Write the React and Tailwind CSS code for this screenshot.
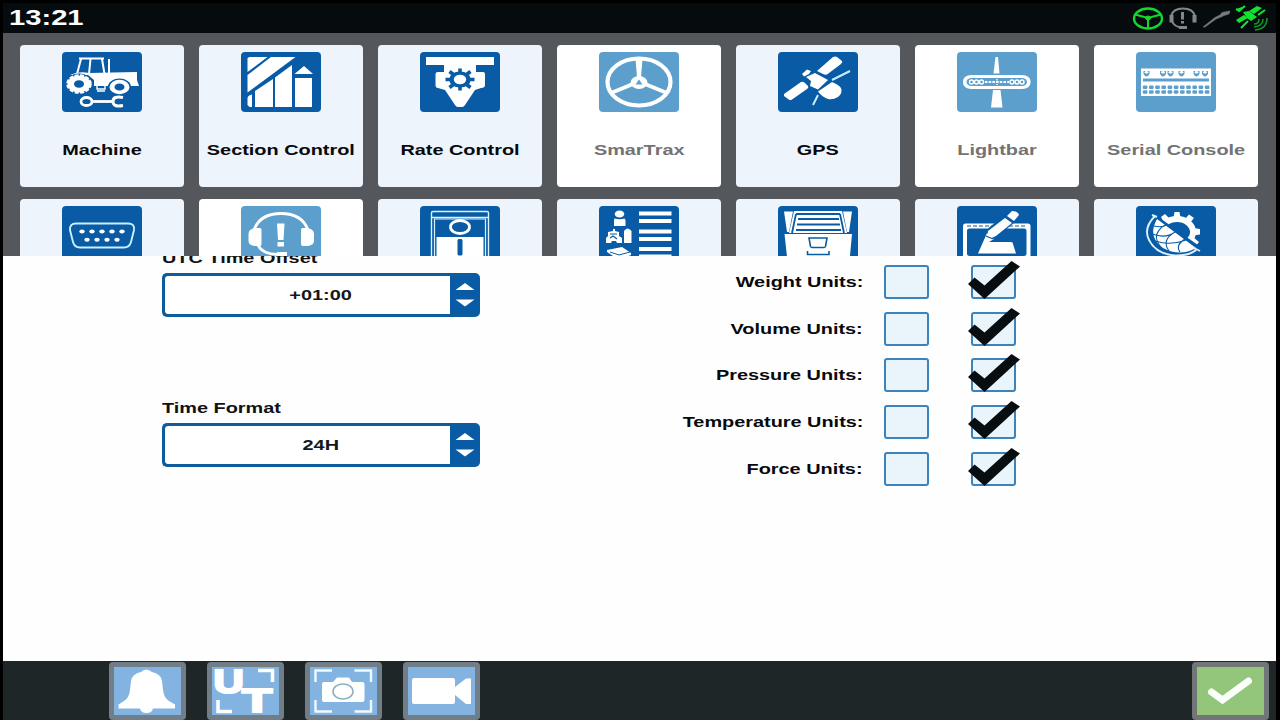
import React, { useState } from 'react';
import clsx from 'clsx';

const Wide = ({ children, className }) => (
  <span className={clsx('inline-block whitespace-nowrap font-bold scale-x-[1.325]', className)}>
    {children}
  </span>
);

// tile icons share an 80x60 box, c is the colour of the box itself
const TractorIcon = ({ c }) => (
  <g>
    <path d="M17 6.500H42M19 7L15 22M28.500 7L27 22M40 7L42.500 22M47 7V21" stroke="#fff" strokeWidth="2" fill="none" />
    <path d="M8 23Q16 19 27 21L75 20V28L77 34H68Q65 27 57 27Q49 27 46 34H32V28L26 23Z" fill="#fff" />
    <path d="M33 33H43V37H35V33M35 39H43" stroke="#fff" strokeWidth="1.400" fill="none" />
    <ellipse cx="17" cy="32" rx="13.500" ry="10.500" fill={c} />
    <ellipse cx="17" cy="32" rx="11.500" ry="8.500" fill="#fff" />
    <ellipse cx="17" cy="32" rx="11.800" ry="8.800" fill="none" stroke="#fff" strokeWidth="2" strokeDasharray="4 1.500" />
    <ellipse cx="17" cy="32" rx="5" ry="3.800" fill={c} />
    <ellipse cx="57.500" cy="35" rx="11.500" ry="8.500" fill={c} />
    <ellipse cx="57.500" cy="35" rx="10" ry="7.200" fill="#fff" />
    <ellipse cx="57.500" cy="35" rx="5" ry="3.600" fill={c} />
    <ellipse cx="24.500" cy="49.500" rx="5.500" ry="4" fill="none" stroke="#fff" strokeWidth="2.800" />
    <path d="M30 49.500H50" stroke="#fff" strokeWidth="2.800" />
    <path d="M61 45.500Q51 43.500 51 49.500Q51 55.500 61 53.500" fill="none" stroke="#fff" strokeWidth="3" />
  </g>
);

const SectionIcon = () => (
  <g fill="#fff">
    <path d="M8 5H26.500L6.500 20V6.500Z" />
    <path d="M30 5H54.500L6.500 40.500V23Z" />
    <path d="M6.500 46Q7 43 11 42.500V55H8.500L6.500 53Z" />
    <path d="M14 39L32 27V55H14Z" />
    <path d="M34 25.500L51 13V55H34Z" />
    <path d="M54 26H71V55H54Z" />
    <path d="M53.500 22L63 14L72 22Z" />
  </g>
);

const RateIcon = ({ c }) => (
  <g>
    <path d="M6 5H74V13H56V20H63Q65 20 65 22V33Q65 36 61 36L55 38L45 53Q44 55 42 55H38Q36 55 35 53L25 38L18 36Q15.500 36 15.500 33V22Q15.500 20 18 20H24V13H6Z" fill="#fff" />
    <path d="M40 16.500V38.500M25.500 27.500H54.500M29.500 19.500L50.500 35.500M50.500 19.500L29.500 35.500" stroke={c} strokeWidth="3.600" />
    <ellipse cx="40" cy="27.500" rx="10.800" ry="8" fill={c} />
    <ellipse cx="40" cy="27.500" rx="6.200" ry="4.800" fill="#fff" />
  </g>
);

const WheelIcon = ({ c }) => (
  <g fill="none" stroke="#fff">
    <ellipse cx="40" cy="30" rx="31.500" ry="23.500" strokeWidth="4.200" />
    <path d="M34 32L12 41M46 32L68 41" strokeWidth="4" />
    <path d="M36.500 7H43.500L42 25H38Z" fill="#fff" stroke="none" />
    <ellipse cx="40" cy="30.500" rx="8.500" ry="6.500" fill="#fff" stroke="none" />
    <path d="M40 27.500L43.500 32.500H36.500Z" fill={c} stroke="none" />
  </g>
);

const SatelliteIcon = () => (
  <g>
    <path d="M39 19L55 5Q57 4 59 5L64 9Q65 10 63 12L49 22.500Q47 23 45 22Z" fill="#fff" />
    <path d="M6 42L23 30Q25 29 27 31L30 34Q31 36 29 37L14 47.500Q12 49 10 47L6 44Z" fill="#fff" />
    <path d="M28 25L37 21L50 28L40 37.500L32 34L33 29Z" fill="#fff" />
    <path d="M24 22L29 17.500L33 19L31 22L26 24.500Z" fill="#fff" />
    <path d="M40 39.500L54 30Q61 33 63 36Q65 41 60 45Q55 48 50 47Q44 45 40 39.500Z" fill="#fff" />
    <path d="M54 28L72 19M40 43L35 53" stroke="#c5f0ff" strokeWidth="2" />
  </g>
);

const LightbarIcon = ({ c }) => (
  <g>
    <path d="M38.500 5H41L42.500 21.500H36.500Z" fill="#fff" />
    <path d="M36 38H43.500L45.500 55.500H34Z" fill="#fff" />
    <rect x="6" y="23" width="67.500" height="14" rx="8" ry="6" fill="#fff" />
    <rect x="9.500" y="26" width="60.500" height="8" rx="5" ry="4" fill={c} />
    <g fill="none" stroke="#fff" strokeWidth="1.400">
      <circle cx="14.500" cy="30" r="2" /><circle cx="19.500" cy="30" r="2" /><circle cx="24.500" cy="30" r="2" />
      <circle cx="55" cy="30" r="2" /><circle cx="60" cy="30" r="2" /><circle cx="65" cy="30" r="2" />
      <path d="M28 30H52" strokeWidth="1.800" strokeDasharray="2.500 1.200" />
      <path d="M40 27V33" strokeDasharray="1.500 1" />
    </g>
  </g>
);

const ConsoleIcon = ({ c }) => (
  <g>
    <rect x="5" y="16.500" width="70" height="27.500" fill="#fff" />
    {[10.5, 27, 34.5, 45.5, 60.5, 69].map((x) => (
      <g key={x}>
        <path d={`M${x - 3} 19V22Q${x} 27 ${x + 3} 22V19Z`} fill={c} />
        <ellipse cx={x} cy="20.300" rx="1.800" ry="1.300" fill="#fff" />
      </g>
    ))}
    <rect x="7" y="26.500" width="66" height="3" fill={c} />
    {[...Array(11).keys()].map((i) => (
      <g key={i} fill={c}>
        <rect x={6.8 + i * 6.2} y="33.500" width="4.600" height="3.500" rx="1" />
        <rect x={6.8 + i * 6.2} y="38.300" width="4.600" height="3.500" rx="1" />
      </g>
    ))}
  </g>
);

const PortIcon = () => (
  <g>
    <path d="M14 17.500H66Q73 17.500 72 24L69 36Q67.500 41.500 62 41.500H18Q12.500 41.500 11 36L8 24Q7.500 17.500 14 17.500Z" fill="none" stroke="#c9f0ff" strokeWidth="1.900" />
    {[20, 30, 40, 50, 60].map((x) => <ellipse key={x} cx={x} cy="25.500" rx="2.700" ry="2" fill="#fff" />)}
    {[25, 35, 45, 55].map((x) => <ellipse key={x} cx={x} cy="33.700" rx="2.700" ry="2" fill="#fff" />)}
  </g>
);

const HeadsetIcon = () => (
  <g>
    <path d="M13 24Q19 7.500 40 7.500T67 24M17 39Q21 48 37 48.500" fill="none" stroke="#fff" strokeWidth="2.800" />
    <path d="M14 22H19Q20.500 22 20.500 24V38Q20.500 40 19 40H13Q7.500 39 7.500 35V28Q7.500 23 14 22Z" fill="#fff" />
    <path d="M66 22H61.500Q60 22 60 24V38Q60 40 61.500 40H67Q73 39 73 35V28Q73 23 66 22Z" fill="#fff" />
    <path d="M36 17.500H43.500L42.500 34H37ZM36.500 36H43V40.500H36.500ZM36 46H46V52H36Z" fill="#fff" />
  </g>
);

const SwitchIcon = ({ c }) => (
  <g fill="none">
    <path d="M11.500 60V7Q11.500 5.500 13 5.500H67Q68.500 5.500 68.500 7V60M12 11.500H68" stroke="#d8f3ff" strokeWidth="1.400" />
    <path d="M14.500 60V13H65.500V60" stroke="#d8f3ff" strokeWidth="1.200" />
    <ellipse cx="40" cy="21" rx="9.500" ry="6.500" stroke="#fff" strokeWidth="2.800" />
    <rect x="16.500" y="31" width="47" height="29" fill="#fff" />
    <rect x="37.500" y="33" width="5" height="16.500" rx="1.500" fill={c} />
  </g>
);

const ListIcon = ({ c }) => (
  <g fill="#fff">
    <ellipse cx="20.500" cy="8" rx="4.800" ry="3.500" />
    <path d="M15.500 12.500Q20.500 14 25.500 12.500L26.500 14V20H15V14Z" />
    <path d="M9 26L14 25V23H16V25L20 26V30L23 32V37H18L17 35H13L12 37H7V32L9 30Z" />
    <path d="M11 28H18M11 32L14 30L18 33" stroke={c} strokeWidth="1.200" fill="none" />
    <path d="M25 25Q28.500 20 32.500 25V37H25Z" />
    <path d="M8 44L23 41L32 47V49L20 54L8 46Z" />
    <path d="M11 46L20 49L31 46" stroke={c} strokeWidth="1" fill="none" />
    {[5.5, 13, 23.5, 31, 41, 48.5].map((y) => <rect key={y} x="40" y={y} width="32.500" height="4" />)}
  </g>
);

const FilesIcon = ({ c }) => (
  <g>
    <path d="M6 5.500H15L11 26H9ZM74 5.500H65L69 26H71Z" fill="#fff" />
    <path d="M16 5H64L69 27H11Z" fill="#fff" />
    <path d="M18 8H62M20 13H61M19 18.500H62M18 24H63M18 8L14 27M62 8L66 27" stroke={c} strokeWidth="1.800" fill="none" />
    <path d="M6.500 28H74L71 60H10Z" fill="#fff" />
    <path d="M31 32H49L47.500 40.500Q47 41.500 46 41.500H34Q33 41.500 32.500 40.500ZM29.500 45V48.500H51V45" fill="none" stroke={c} strokeWidth="1.600" />
  </g>
);

const EditIcon = ({ c }) => (
  <g>
    <path d="M6 60V20Q6 17.500 8.500 17.500H71Q73.500 17.500 73.500 20V60Z" fill="#fff" />
    <path d="M10 20H70" stroke={c} strokeWidth="1.200" strokeDasharray="4 2" />
    <rect x="10" y="22.500" width="59.500" height="27.500" rx="2.500" fill={c} />
    <path d="M35 27L57 9" stroke={c} strokeWidth="12" />
    <path d="M30 27L34 32L37 33L32 36H54Q56 36 56 38L59 47.500H21Z" fill="#fff" />
    <path d="M31 25L48 12L55 17L39 30L30 34Z" fill="#fff" />
    <path d="M50 10L55 5Q61 5 62 9L57 15Z" fill="#fff" />
    <path d="M29 30L36 33" stroke={c} strokeWidth="1.200" />
  </g>
);

const GlobeIcon = ({ c }) => (
  <g>
    <ellipse cx="41" cy="26" rx="16" ry="13" fill="none" stroke="#fff" strokeWidth="6" />
    <path d="M37.500 12L38.500 6H43.500L44.500 12ZM49 13L53 8.500L58 12L54 17ZM57 22L64 23V28.500L57 29.500ZM57 31L63 36L59 41L53 36ZM33 12L29 8L25 11L28 17Z" fill="#fff" />
    <path d="M14 5L66 42V60H10Z" fill={c} />
    <path d="M21 13L60 42Q44 51 27 42Q11 31 21 13Z" fill="#fff" />
    <path d="M16 28Q30 33 39 26M19 35Q35 40 50 34M18 20Q26 22 30 19M29 19Q15 28 24 40M39 26Q25 34 33 45M49 33Q39 39 44 46" fill="none" stroke={c} strokeWidth="1.100" />
    <path d="M16 9L21 11M19 10Q7 22 13 34Q20 48 39 49.500Q54 50 61 43M58 42L64 45M40 50V60" fill="none" stroke="#d8f3ff" strokeWidth="1.900" />
  </g>
);

const TILES = [
  { id: 'machine', label: 'Machine', icon: TractorIcon },
  { id: 'section', label: 'Section Control', icon: SectionIcon },
  { id: 'rate', label: 'Rate Control', icon: RateIcon },
  { id: 'smartrax', label: 'SmarTrax', icon: WheelIcon, disabled: true },
  { id: 'gps', label: 'GPS', icon: SatelliteIcon },
  { id: 'lightbar', label: 'Lightbar', icon: LightbarIcon, disabled: true },
  { id: 'serial', label: 'Serial Console', icon: ConsoleIcon, disabled: true },
  { id: 'port', icon: PortIcon },
  { id: 'support', icon: HeadsetIcon, disabled: true },
  { id: 'switch', icon: SwitchIcon },
  { id: 'lists', icon: ListIcon },
  { id: 'files', icon: FilesIcon },
  { id: 'edit', icon: EditIcon },
  { id: 'region', icon: GlobeIcon },
];

const UNITS = ['Weight', 'Volume', 'Pressure', 'Temperature', 'Force'];

const Tile = ({ tile }) => {
  const Icon = tile.icon;
  const color = tile.disabled ? '#5c9fcd' : '#085ba4';
  return (
    <button
      className={clsx(
        'flex h-[142px] w-[164px] flex-col items-center rounded-[4px] pt-[7px]',
        tile.disabled ? 'bg-white text-[#737373]' : 'bg-[#edf4fb] text-[#08090c]'
      )}
    >
      <svg viewBox="0 0 80 60" className="h-[60px] w-20 shrink-0">
        <rect width="80" height="60" rx="4" fill={color} />
        <Icon c={color} />
      </svg>
      {tile.label && <Wide className="mt-7 text-[15px] leading-5">{tile.label}</Wide>}
    </button>
  );
};

const StatusIcons = () => (
  <svg viewBox="0 0 140 30" className="h-[30px] w-[140px]" fill="none">
    <g stroke="#12d92c">
      <ellipse cx="18" cy="15.500" rx="14" ry="10" strokeWidth="2.400" />
      <path d="M5 11.500L18 15L31 11.500M18 15V25" strokeWidth="2" />
      <ellipse cx="18" cy="15" rx="2.500" ry="2" fill="#12d92c" strokeWidth="1" />
    </g>
    <g stroke="#83878a">
      <path d="M41 13Q43 5.500 53 5.500T65 13M42 18Q44 24 52 24.500" strokeWidth="2" />
      <path d="M41.500 12V19.500M64.500 12V19.500" strokeWidth="4" />
      <path d="M52.500 9V16.500M52.500 18V20.500" strokeWidth="3" />
      <path d="M49 24.500H57" strokeWidth="3" />
    </g>
    <path d="M73 24L85 14.500L90 12L92 9.500L100 8L99 11L94 12.500L91 14L86 16L75 24Z" fill="#777b7d" stroke="#777b7d" strokeWidth=".6" />
    <g fill="#12e331">
      <path d="M106 17L114 12L118 15L109 20ZM119 8L127 3L132 5L124 11Z" />
      <path d="M113 9L119 8L127 14L121 18L117 15Z" />
      <path d="M106 6L109 8L115 3M111 25L118 18M128 12L135 7" stroke="#12e331" strokeWidth="2" />
      <path d="M124 21Q129 21 129 16M124 24Q133 23 133 16M125 27Q137 26 137 15" stroke="#0d9526" strokeWidth="1.600" fill="none" />
    </g>
  </svg>
);

const Spinner = ({ label, value }) => (
  <div className="flex h-[150px] w-[318px] flex-col items-start">
    <Wide className="h-5 origin-left text-[15px] leading-5">{label}</Wide>
    <div className="mt-[5px] flex h-[44px] w-full overflow-hidden rounded-[5px] border-[3px] border-r-0 border-[#0e5c9c] bg-[#085ba4]">
      <div className="flex grow items-center justify-center rounded-l-[3px] bg-white text-[15px] leading-5 text-[#15181b]">
        <Wide className="translate-x-[13px]">{value}</Wide>
      </div>
      <svg viewBox="0 0 30 38" className="h-[38px] w-[30px]">
        <path d="M15 7L24.500 14H5.500ZM15 30.500L24.500 23.500H5.500Z" fill="#fff" />
      </svg>
    </div>
  </div>
);

const CheckBox = ({ checked, onClick }) => (
  <button onClick={onClick} className="relative h-[34px] w-[45px] rounded-[3px] border-2 border-[#3b83bd] bg-[#eaf4fb]">
    {checked && (
      <svg viewBox="0 0 52 38" className="absolute -left-[5px] -top-[6px] h-[38px] w-[52px] max-w-none">
        <path d="M0 23L6.500 16.500L16.500 24.500L43.500 0L52 5.500L16.500 38Z" fill="#080d0f" />
      </svg>
    )}
  </button>
);

const FooterButton = ({ children, green, className }) => (
  <button
    className={clsx(
      'h-[58px] w-[77px] rounded-[4px] border-[5px]',
      green ? 'border-[#717779] bg-[#93c67a]' : 'border-[#727e87] bg-[#83b3e1]',
      className
    )}
  >
    <svg viewBox="5 5 67 48" className="h-12 w-[67px] overflow-visible" fill="none">{children}</svg>
  </button>
);

const App = () => {
  const [metric, setMetric] = useState(UNITS.map(() => true));

  const toggle = (index, value) => {
    setMetric(metric.map((m, i) => (i === index ? value : m)));
  };

  return (
    <div
      className="flex h-[720px] w-[1280px] flex-col overflow-hidden bg-black pl-[3px] pr-1 pt-[3px]"
      style={{ fontFamily: '"Liberation Sans", Arial, sans-serif' }}
    >
      <header className="flex h-[30px] shrink-0 items-center justify-between bg-[#060c0e] pl-[6px] pr-[6px]">
        <Wide className="origin-left text-[22px] leading-[30px] text-white">13:21</Wide>
        <StatusIcons />
      </header>

      <div className="grid h-[223px] shrink-0 auto-rows-[142px] grid-cols-[repeat(7,164px)] gap-x-[15px] gap-y-3 overflow-hidden bg-[#54585c] pl-[17px] pt-3">
        {TILES.map((tile) => <Tile key={tile.id} tile={tile} />)}
      </div>

      <main className="flex h-[405px] shrink-0 items-start overflow-hidden bg-[#fefefe] pl-[159px]">
        <div className="-mt-2 w-[492px] shrink-0 text-[#101214]">
          <Spinner label="UTC Time Offset" value="+01:00" />
          <Spinner label="Time Format" value="24H" />
        </div>
        <div className="flex flex-col gap-[12.67px] pt-[9px]">
          {UNITS.map((unit, i) => (
            <div key={unit} className="flex h-[34px] items-center">
              <div className="w-[209px] text-right text-[15px] leading-5 text-[#08090b]">
                <Wide className="origin-right">{unit} Units:</Wide>
              </div>
              <div className="flex gap-[42px] pl-[21px]">
                <CheckBox checked={!metric[i]} onClick={() => toggle(i, false)} />
                <CheckBox checked={metric[i]} onClick={() => toggle(i, true)} />
              </div>
            </div>
          ))}
        </div>
      </main>

      <footer className="flex h-[59px] shrink-0 items-start gap-[21px] bg-[#1f2628] pl-[106px] pr-[7px] pt-px">
        <FooterButton>
          <path d="M32 10Q37 5 43 10Q52 12 53 19L54 28Q55 36 60 39L66 42.500V46.500H44Q43 51 37.500 51Q32 51 31 46.500H9.500V42.500L15 39Q20 36 21 28L22 19Q23 12 32 10Z" fill="#fff" />
        </FooterButton>
        <FooterButton>
          <g fill="#fff" stroke="#fff" strokeWidth="2.200" fontWeight="bold">
            <text transform="translate(6.500 31) scale(1.270 1)" fontSize="33">U</text>
            <text transform="translate(35 50) scale(1.450 1)" fontSize="34">T</text>
          </g>
          <path d="M51 8.500H65.500V20M11 38V49.500H25" stroke="#fff" strokeWidth="3.500" />
        </FooterButton>
        <FooterButton>
          <path d="M19 20H28L32 15.500H44L47 20H57Q59.500 20 59.500 22V38Q59.500 40 57 40H19Q17 40 17 38V22Q17 20 19 20Z" fill="#fff" />
          <ellipse cx="38" cy="29.500" rx="10" ry="7.500" stroke="#8eb2bd" strokeWidth="1.600" />
          <path d="M27 8.500H10.500V20M49.500 8.500H66V20M10.500 38V49.500H27M66 38V49.500H49.500" stroke="#effaff" strokeWidth="2.400" />
        </FooterButton>
        <FooterButton>
          <path d="M11 16H50Q52 16 52 18V25L63 16.500H68V42H63L52 33V40Q52 42 50 42H11Q9 42 9 40V18Q9 16 11 16Z" fill="#fff" />
        </FooterButton>
        <FooterButton green className="ml-auto">
          <path d="M19.500 30L30.500 38L56.500 19" stroke="#fbfffa" strokeWidth="7" strokeLinejoin="miter" strokeLinecap="round" />
        </FooterButton>
      </footer>
    </div>
  );
};

export default App;
